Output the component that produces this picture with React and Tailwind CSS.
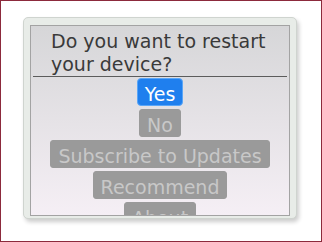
import React from 'react';

const options = ['Yes', 'No', 'Subscribe to Updates', 'Recommend', 'About'];

function RestartDialog() {
  return (
    <div className="w-[322px] h-[242px] bg-white border border-[#8c2a3c] pl-[22px] pt-[16px] font-['DejaVu_Sans',sans-serif]">
      <div className="w-[274px] rounded-[5px] bg-[#e8ece8] border border-[#cfd4cf] pl-[6px] pt-[7px] pb-[2px] shadow-[2px_3px_4px_rgba(0,0,0,0.2)]">
        <div className="w-[260px] h-[191px] overflow-hidden border border-[#a3a3a3] bg-gradient-to-b from-[#d6d6d8] to-[#f5eff5]">
          <div className="mx-[2px] pt-[4px] pl-[18px] border-b border-[#5c5c5c] text-[19px] leading-[23px] text-[#3a3a3a]">
            Do you want to restart
            <br />
            your device?
          </div>
          <div className="flex flex-col items-center gap-[3px] mt-[1px]">
            {options.map((label, i) => (
              <div
                key={label}
                className={
                  i === 0
                    ? 'pt-[4px] px-[7px] rounded-[4px] border border-[#5aa6f7] bg-[#1f7fee] text-white text-[19px] leading-[22px]'
                    : 'pt-[4px] px-[7px] rounded-[3px] border border-[#9a9a9a] bg-[#9a9a9a] text-[#c8c8c8] text-[19px] leading-[22px]'
                }
              >
                {label}
              </div>
            ))}
          </div>
        </div>
      </div>
    </div>
  );
}

export default function App() {
  return <RestartDialog />;
}
